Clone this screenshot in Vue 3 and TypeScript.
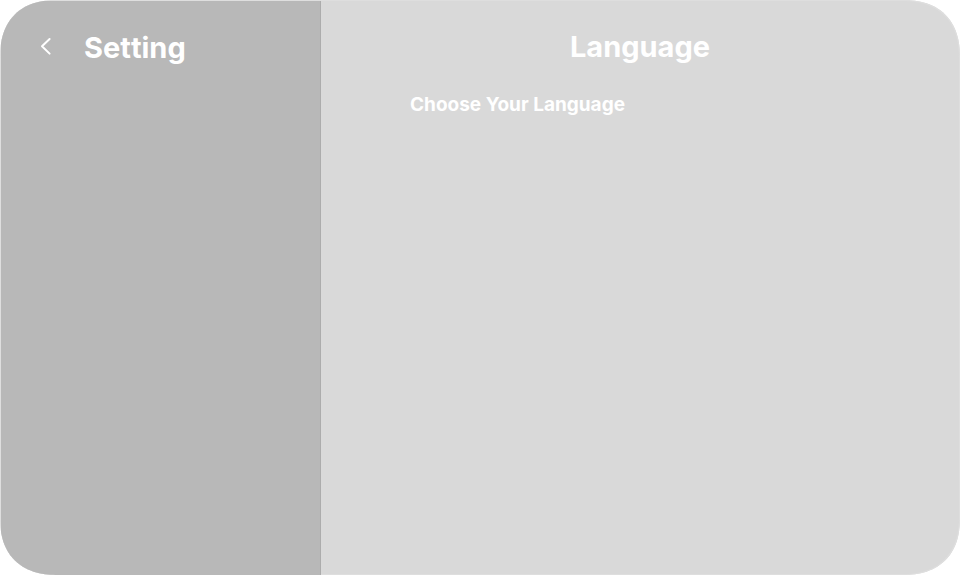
<script setup lang="ts">
import { ref } from 'vue'

const title = ref<string>('Setting')
const section = ref<string>('Language')
const prompt = ref<string>('Choose Your Language')
</script>

<template>
  <div class="window">
    <aside class="sidebar">
      <header class="sidebar-head">
        <button class="back" type="button" aria-label="Back">
          <svg width="12" height="20" viewBox="0 0 12 20" fill="none" aria-hidden="true">
            <path d="M9.6 3 L2 10.3 L9.6 17.6" stroke="#fff" stroke-width="2" stroke-linecap="round" stroke-linejoin="round" />
          </svg>
        </button>
        <h1 class="title">{{ title }}</h1>
      </header>
    </aside>
    <main class="content">
      <h2 class="section">{{ section }}</h2>
      <p class="prompt">{{ prompt }}</p>
    </main>
  </div>
</template>

<style>
body {
  margin: 0;
  background: #fff;
}
</style>

<style scoped>
.window {
  display: grid;
  grid-template-columns: 1fr 2fr;
  box-sizing: border-box;
  min-height: 100vh;
  border-radius: 58px;
  corner-shape: superellipse(1.25);
  overflow: hidden;
  background: #d9d9d9;
  box-shadow: inset 0 0 0 1px #dedede;
  color: #fff;
  font-family: Inter, "Liberation Sans", sans-serif;
}

.sidebar {
  margin: 1px -1px 0 1px;
  background: #b8b8b8;
  border-right: 1px solid #acacac;
}

.sidebar-head {
  display: flex;
  align-items: center;
  padding: 29px 39px;
  gap: 32px;
}

.back {
  display: flex;
  padding: 0 0 4px;
  border: 0;
  background: none;
  cursor: pointer;
}

.title,
.section {
  margin: 0;
  font-size: 29px;
  line-height: 36px;
  font-weight: 700;
}

.title {
  font-kerning: none;
}

.content {
  padding: 29px 90px;
}

.section {
  text-align: center;
}

.prompt {
  margin: 28px 0 0;
  font-size: 19px;
  line-height: 24px;
  font-weight: 700;
}
</style>
